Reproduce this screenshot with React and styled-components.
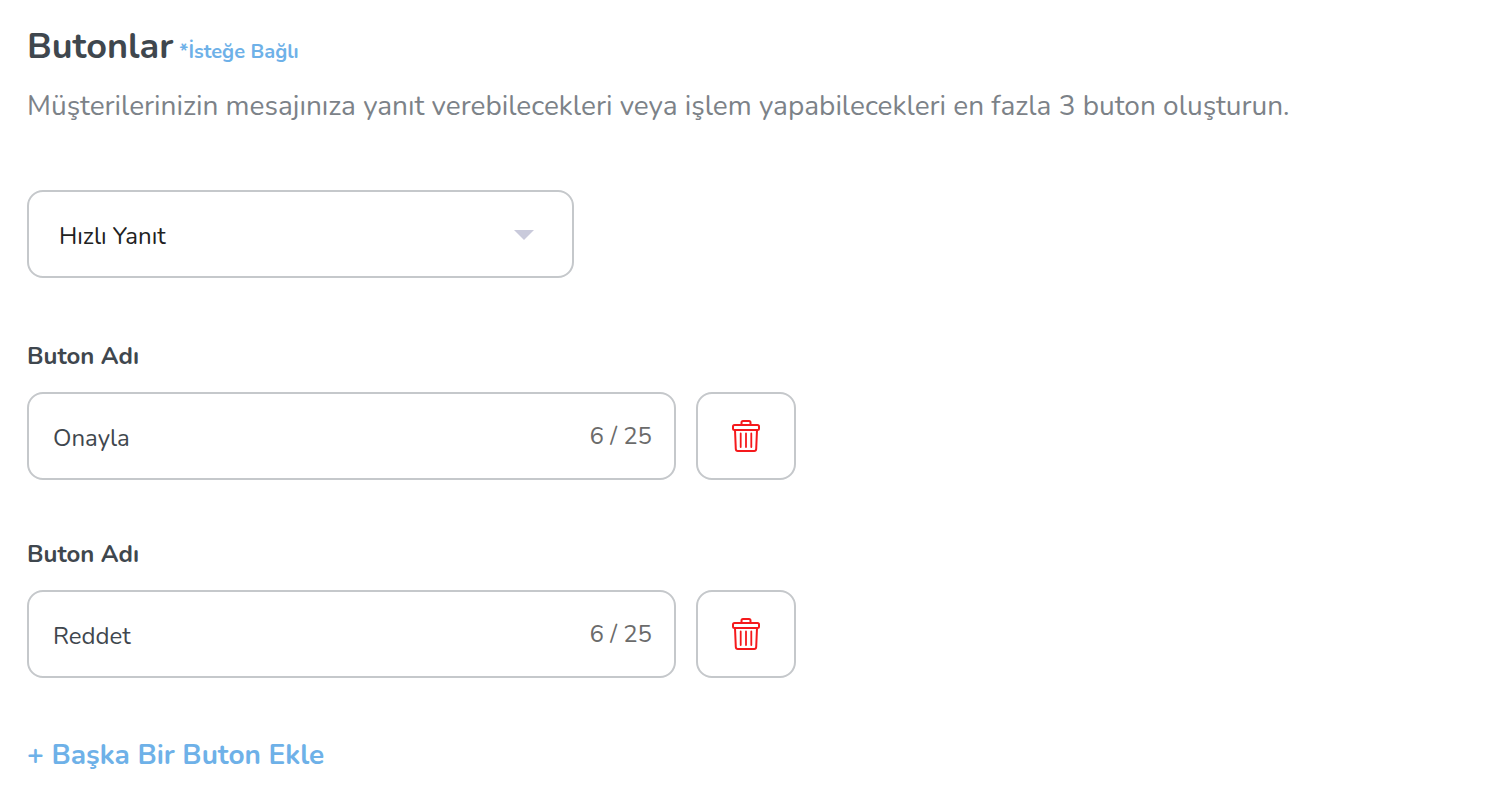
import React, { Fragment, useState } from 'react'
import styled, { createGlobalStyle } from 'styled-components'

const MAX_LENGTH = 25
const MAX_BUTTONS = 3

const GlobalStyle = createGlobalStyle`
  * {
    box-sizing: border-box;
  }
  body {
    margin: 0;
    background: #fff;
    color: #3f474e;
  }
  body, button, input, select {
    font-family: Nunito, Lato, 'Open Sans', sans-serif;
    font-weight: 400;
  }
`

const Page = styled.main`
  padding: 23px 27px;
`

const Heading = styled.div`
  display: flex;
  align-items: baseline;
  gap: 6px;
`

const Title = styled.h1`
  margin: 0;
  font-size: 36px;
  line-height: 48px;
  font-weight: 700;
`

const Optional = styled.span`
  color: #6eb1e8;
  font-size: 20px;
  font-weight: 700;
`

const Description = styled.p`
  margin: 15px 0 64px;
  color: #7c8288;
  font-size: 28px;
  line-height: 40px;
`

const SelectBox = styled.div`
  position: relative;
  max-width: 547px;
`

const Select = styled.select`
  appearance: none;
  display: block;
  width: 100%;
  height: 88px;
  padding: 4px 60px 0 30px;
  border: 2px solid #c5c8cb;
  border-radius: 16px;
  background: #fff;
  color: #212121;
  font-size: 24px;
`

const Arrow = styled.span`
  position: absolute;
  top: 40px;
  right: 40px;
  border: 10px solid transparent;
  border-top-color: #c9cadb;
  border-bottom: 0;
  pointer-events: none;
`

const Fields = styled.div`
  display: grid;
  gap: 58px;
  max-width: 769px;
  margin: 62px 0 57px;
`

const Label = styled.label`
  display: block;
  margin-bottom: 20px;
  font-size: 24px;
  line-height: 32px;
  font-weight: 700;
`

const Row = styled.div`
  display: flex;
  gap: 20px;
`

const InputBox = styled.div`
  display: flex;
  flex: 1;
  align-items: center;
  min-width: 0;
  height: 88px;
  padding: 0 22px 0 24px;
  border: 2px solid #c5c8cb;
  border-radius: 16px;
`

const Input = styled.input`
  flex: 1;
  min-width: 0;
  height: 100%;
  padding: 4px 0 0;
  border: 0;
  outline: 0;
  background: transparent;
  color: #3f474e;
  font-size: 24px;
`

const Counter = styled.span`
  color: #6b6b6b;
  font-size: 24px;
`

const DeleteButton = styled.button`
  display: flex;
  align-items: center;
  justify-content: center;
  width: 100px;
  height: 88px;
  padding: 0;
  border: 2px solid #c5c8cb;
  border-radius: 16px;
  background: #fff;
  color: #f5191c;
  cursor: pointer;
`

const AddButton = styled.button`
  padding: 0;
  border: 0;
  background: none;
  color: #6eb1e8;
  font-size: 28px;
  line-height: 40px;
  font-weight: 700;
  cursor: pointer;
`

const TrashIcon = () => (
  <svg
    width="28"
    height="34"
    viewBox="0 0 28 34"
    fill="none"
    stroke="currentColor"
    strokeWidth="2"
    strokeLinecap="round"
    strokeLinejoin="round"
    aria-hidden="true"
  >
    <path d="M9.500 5.500V3.500Q9.500 2 11 2h6q1.500 0 1.500 1.500v2" />
    <rect x="1" y="6" width="26" height="5" rx="1.500" />
    <path d="M3 11 3.800 30Q3.900 32 5.800 32h16.400q1.900 0 2-2L25 11" />
    <path d="M8.700 14.500v13.500M14 14.500v13.500M19.300 14.500v13.500" strokeWidth="1.800" />
  </svg>
)

const App = () => {
  const [type, setType] = useState('quick')
  const [names, setNames] = useState(['Onayla', 'Reddet'])

  const rename = (index, value) =>
    setNames(names.map((name, i) => (i === index ? value : name)))

  const remove = index => setNames(names.filter((name, i) => i !== index))

  return (
    <Fragment>
      <GlobalStyle />
      <Page lang="tr">
        <Heading>
          <Title>Butonlar</Title>
          <Optional>*İsteğe Bağlı</Optional>
        </Heading>
        <Description>
          Müşterilerinizin mesajınıza yanıt verebilecekleri veya işlem
          yapabilecekleri en fazla 3 buton oluşturun.
        </Description>
        <SelectBox>
          <Select
            aria-label="Butonlar"
            value={type}
            onChange={e => setType(e.target.value)}
          >
            <option value="quick">Hızlı Yanıt</option>
          </Select>
          <Arrow />
        </SelectBox>
        <Fields>
          {names.map((name, index) => (
            <div key={index}>
              <Label htmlFor={`button-${index}`}>Buton Adı</Label>
              <Row>
                <InputBox>
                  <Input
                    id={`button-${index}`}
                    value={name}
                    maxLength={MAX_LENGTH}
                    onChange={e => rename(index, e.target.value)}
                  />
                  <Counter>
                    {name.length} / {MAX_LENGTH}
                  </Counter>
                </InputBox>
                <DeleteButton
                  type="button"
                  aria-label="Sil"
                  onClick={() => remove(index)}
                >
                  <TrashIcon />
                </DeleteButton>
              </Row>
            </div>
          ))}
        </Fields>
        {names.length < MAX_BUTTONS && (
          <AddButton type="button" onClick={() => setNames([...names, ''])}>
            + Başka Bir Buton Ekle
          </AddButton>
        )}
      </Page>
    </Fragment>
  )
}

export default App
